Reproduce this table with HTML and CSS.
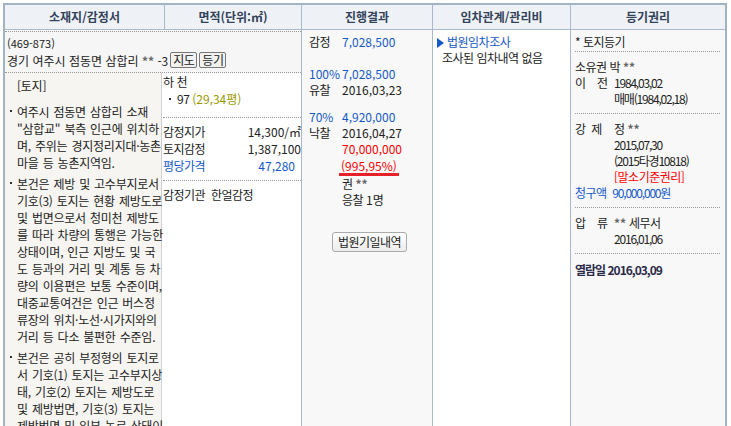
FILE: index.html
```html
<!DOCTYPE html>
<html lang="ko">
<head>
<meta charset="utf-8">
<title>경매 물건 상세</title>
<link rel="stylesheet" href="styles.css">
</head>
<body>
<div class="board">
  <div class="th">소재지/감정서</div>
  <div class="th">면적(단위:㎡)</div>
  <div class="th">진행결과</div>
  <div class="th">임차관계/관리비</div>
  <div class="th last">등기권리</div>

  <div class="td loc">
    <div class="addr">
      <div class="zip">(469-873)</div>
      <div class="addr-line">경기 여주시 점동면 삼합리 <span class="mask">**</span> -3<span class="mini-btn">지도</span><span class="mini-btn">등기</span></div>
    </div>
    <div class="loc-body">
      <div class="appraisal">
        <div class="tag">[토지]</div>
        <p class="bullet">여주시 점동면 삼합리 소재<br>"삼합교" 북측 인근에 위치하<br>며, 주위는 경지정리지대·농촌<br>마을 등 농촌지역임.</p>
        <p class="bullet">본건은 제방 및 고수부지로서<br>기호(3) 토지는 현황 제방도로<br>및 법면으로서 청미천 제방도<br>를 따라 차량의 통행은 가능한<br>상태이며, 인근 지방도 및 국<br>도 등과의 거리 및 계통 등 차<br>량의 이용편은 보통 수준이며,<br>대중교통여건은 인근 버스정<br>류장의 위치·노선·시가지와의<br>거리 등 다소 불편한 수준임.</p>
        <p class="bullet">본건은 공히 부정형의 토지로<br>서 기호(1) 토지는 고수부지상<br>태, 기호(2) 토지는 제방도로<br>및 제방법면, 기호(3) 토지는<br>제방법면 및 일부 농로 상태이</p>
      </div>
      <div class="area">
        <div class="area-top">
          <div>하 천</div>
          <div class="dot-item">97 <span class="olive">(29,34평)</span></div>
        </div>
        <div class="area-mid">
          <div class="kv"><span>감정지가</span><span class="num">14,300/㎡</span></div>
          <div class="kv"><span>토지감정</span><span class="num">1,387,100</span></div>
          <div class="kv blue"><span>평당가격</span><span class="num pr">47,280</span></div>
        </div>
        <div class="area-bot">감정기관&nbsp;&nbsp;한얼감정</div>
      </div>
    </div>
  </div>

  <div class="td result">
    <div class="r"><span class="lbl">감정</span><span class="num blue">7,028,500</span></div>
    <div class="r blank"></div>
    <div class="r"><span class="lbl blue num">100%</span><span class="num blue">7,028,500</span></div>
    <div class="r"><span class="lbl">유찰</span><span class="num">2016,03,23</span></div>
    <div class="r gap"><span class="lbl blue num">70%</span><span class="num blue">4,920,000</span></div>
    <div class="r"><span class="lbl">낙찰</span><span class="num">2016,04,27</span></div>
    <div class="r"><span class="lbl"></span><span class="num red">70,000,000</span></div>
    <div class="r tall"><span class="lbl"></span><span class="num red mark">(995,95%)</span></div>
    <div class="r"><span class="lbl"></span><span>권 <span class="mask">**</span></span></div>
    <div class="r"><span class="lbl"></span><span>응찰 <span class="num">1</span>명</span></div>
    <div class="btn-wrap"><button class="btn" type="button">법원기일내역</button></div>
  </div>

  <div class="td lease">
    <div class="lease-link"><span class="tri"></span>법원임차조사</div>
    <div class="lease-none">조사된 임차내역 없음</div>
  </div>

  <div class="td reg last">
    <div class="reg-sec first">* 토지등기</div>
    <div class="reg-sec">
      <div>소유권 박 <span class="mask">**</span></div>
      <div class="row2"><span class="rlbl">이&nbsp;&nbsp;&nbsp;&nbsp;전</span><span class="d">1984,03,02</span></div>
      <div class="ind d">매매(1984,02,18)</div>
    </div>
    <div class="reg-sec">
      <div class="row2"><span class="rlbl">강&nbsp;&nbsp;제</span>정 <span class="mask">**</span></div>
      <div class="ind d">2015,07,30</div>
      <div class="ind d">(2015타경10818)</div>
      <div class="ind red">[말소기준권리]</div>
      <div class="blue">청구액&nbsp;&nbsp;<span class="d">90,000,000</span>원</div>
    </div>
    <div class="reg-sec">
      <div class="row2"><span class="rlbl">압&nbsp;&nbsp;&nbsp;&nbsp;류</span><span class="mask">**</span> 세무서</div>
      <div class="ind d">2016,01,06</div>
    </div>
    <div class="reg-sec last-sec">열람일 2016,03,09</div>
  </div>
</div>
</body>
</html>
```

FILE: styles.css
```css
* { box-sizing: border-box; }

body {
  margin: 0;
  background: #fff;
  font-family: "Noto Sans CJK KR", "Noto Sans", sans-serif;
  font-size: 12px;
  color: #222;
  letter-spacing: -0.5px;
}

.board {
  margin: 3px 0 0 3px;
  width: 724px;
  border: 2px solid #a3b3c6;
  border-bottom: 0;
  display: grid;
  grid-template-columns: 160px 137px 131px 138px 154px;
  grid-template-rows: 25px 400px;
}

.th {
  background: #eef2f6;
  border-right: 1px solid #a9b8ca;
  border-bottom: 1px solid #a9b8ca;
  font-weight: bold;
  font-size: 12px;
  letter-spacing: 0;
  color: #33425a;
  text-align: center;
  line-height: 24px;
}

.td {
  border-right: 1px solid #a9b8ca;
  line-height: 16px;
  overflow: hidden;
}

.th.last, .td.last { border-right: 0; }

.num { letter-spacing: 0; }
.blue { color: #1558c8; }
.red { color: #f00; }
.olive { color: #9a9a00; letter-spacing: 0; }
.mask { color: #666; font-weight: bold; letter-spacing: 0; }

/* location + area */
.loc {
  grid-column: span 2;
  display: flex;
  flex-direction: column;
  padding-top: 1px;
}

.addr {
  background: #f6f6f6;
  border-top: 1px dotted #999;
  border-bottom: 1px dotted #999;
  padding: 3px 0 3px 2px;
  line-height: 17px;
}

.zip { font-size: 11px; letter-spacing: 0; }

.addr-line { letter-spacing: 0; }

.mini-btn {
  display: inline-block;
  height: 16px;
  line-height: 14px;
  padding: 0 2px;
  margin-left: 2px;
  border: 1px solid #777;
  border-radius: 2px;
  background: #f2f2f2;
  vertical-align: top;
  letter-spacing: -0.5px;
}

.loc-body {
  flex: 1;
  display: flex;
}

.appraisal {
  width: 157px;
  flex: none;
  background: #f7f5f1;
  border-right: 1px solid #cfcfcf;
  padding: 4px 0 0 3px;
  line-height: 17px;
  letter-spacing: -0.25px;
  word-spacing: 1px;
}

.tag { padding-left: 9px; margin-bottom: 9px; }

.bullet {
  margin: 0 0 4px;
  padding-left: 9px;
  position: relative;
  white-space: nowrap;
}

.bullet::before {
  content: "";
  position: absolute;
  left: 2px;
  top: 7px;
  width: 2px;
  height: 2px;
  background: #333;
}

.area {
  flex: 1;
  padding-left: 1px;
  line-height: 17px;
}

.area-top {
  padding-bottom: 10px;
  border-bottom: 1px dotted #999;
}

.dot-item {
  position: relative;
  padding-left: 14px;
}

.dot-item::before {
  content: "";
  position: absolute;
  left: 6px;
  top: 8px;
  width: 2px;
  height: 2px;
  background: #333;
}

.area-mid {
  padding: 5px 0 6px;
  border-bottom: 1px dotted #999;
}

.kv {
  display: flex;
  justify-content: space-between;
}

.pr { padding-right: 6px; }

.area-bot { padding-top: 5px; }

/* result */
.result {
  background: #f8f8f8;
  padding: 4px 0 0 7px;
}

.r { display: flex; height: 16px; }
.r.tall { height: 19px; }
.r.gap { margin-top: 11px; }
.lbl { width: 33px; flex: none; }

.mark {
  display: inline-block;
  height: 18px;
  margin-top: 1px;
  line-height: 15px;
  border-bottom: 3px solid #e8202a;
  padding: 0 2px;
  margin-left: -3px;
}

.btn-wrap {
  text-align: center;
  margin-top: 24px;
  padding-right: 2px;
}

.btn {
  font: inherit;
  letter-spacing: -0.5px;
  color: #222;
  height: 20px;
  line-height: 18px;
  padding: 0 5px;
  border: 1px solid #aaa;
  border-radius: 3px;
  background: linear-gradient(#fff, #ececec);
}

/* lease */
.lease {
  background: #fff;
  padding: 4px 0 0 4px;
}

.lease-link { color: #1558c8; }

.tri {
  display: inline-block;
  width: 0;
  height: 0;
  border-top: 5px solid transparent;
  border-bottom: 5px solid transparent;
  border-left: 7px solid #1558c8;
  margin-right: 3px;
  vertical-align: -1px;
}

.lease-none { padding-left: 5px; }

/* registry */
.reg {
  background: #f8f8f8;
  padding: 4px 5px 0 4px;
}

.reg-sec {
  border-top: 1px dotted #999;
  padding: 7px 0 6px;
}

.reg-sec.first { border-top: 0; padding: 0 0 1px; }

.reg-sec.last-sec {
  font-weight: bold;
  color: #2b2b4b;
  letter-spacing: -1px;
  padding-top: 8px;
}

.rlbl { display: inline-block; width: 39px; }

.ind { padding-left: 39px; }

.d { letter-spacing: -1.2px; }
```
